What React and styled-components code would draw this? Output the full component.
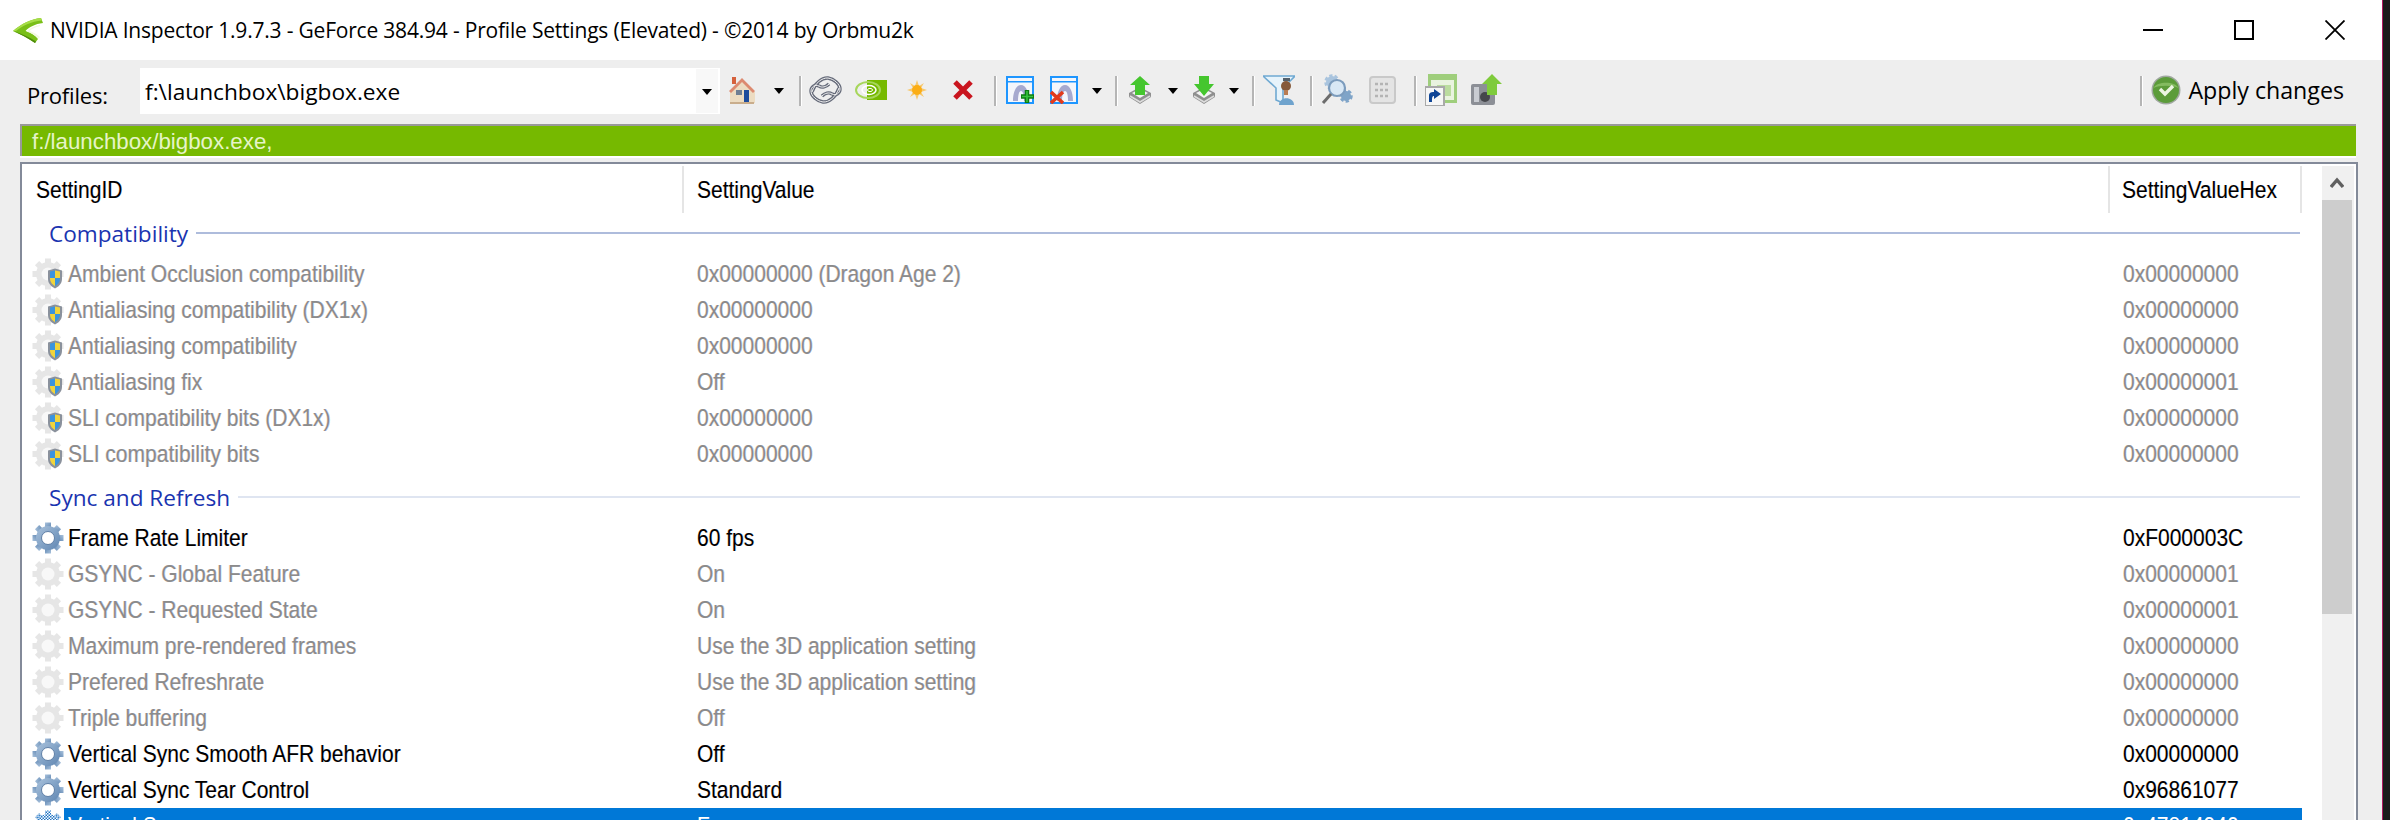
import React from "react";
import styled, { createGlobalStyle, css } from "styled-components";

const GlobalStyle = createGlobalStyle`
  html, body {
    margin: 0;
    padding: 0;
    background: #1b1b1b;
  }
`;

const groups = [
  {
    name: "Compatibility",
    first: true,
    rows: [
      ["Ambient Occlusion compatibility", "0x00000000 (Dragon Age 2)", "0x00000000", "shield"],
      ["Antialiasing compatibility (DX1x)", "0x00000000", "0x00000000", "shield"],
      ["Antialiasing compatibility", "0x00000000", "0x00000000", "shield"],
      ["Antialiasing fix", "Off", "0x00000001", "shield"],
      ["SLI compatibility bits (DX1x)", "0x00000000", "0x00000000", "shield"],
      ["SLI compatibility bits", "0x00000000", "0x00000000", "shield"],
    ],
  },
  {
    name: "Sync and Refresh",
    rows: [
      ["Frame Rate Limiter", "60 fps", "0xF000003C", "on"],
      ["GSYNC - Global Feature", "On", "0x00000001", "off"],
      ["GSYNC - Requested State", "On", "0x00000001", "off"],
      ["Maximum pre-rendered frames", "Use the 3D application setting", "0x00000000", "off"],
      ["Prefered Refreshrate", "Use the 3D application setting", "0x00000000", "off"],
      ["Triple buffering", "Off", "0x00000000", "off"],
      ["Vertical Sync Smooth AFR behavior", "Off", "0x00000000", "on"],
      ["Vertical Sync Tear Control", "Standard", "0x96861077", "on"],
      ["Vertical Sync", "Force on", "0x47814940", "selected"],
    ],
  },
];

const Gear = ({ mode }) => {
  const on = mode === "on";
  const selected = mode === "selected";
  const body = selected ? "url(#dither)" : on ? "url(#gearBlue)" : "#e6e6e6";
  const hole = selected ? "url(#dither)" : on ? "#ffffff" : "#f8f8f8";
  return (
    <svg width="32" height="32" viewBox="0 0 32 32">
      {[0, 45, 90, 135, 180, 225, 270, 315].map((a) => (
        <rect key={a} x="13" y="0.5" width="6" height="6" fill={body} transform={`rotate(${a} 16 16)`} />
      ))}
      <circle cx="16" cy="16" r="12" fill={body} />
      <circle cx="16" cy="16" r="6.5" fill={hole} stroke={on ? "#5f7fa6" : "none"} strokeWidth="1" />
      {mode === "shield" && (
        <g>
          <path d="M16 12.5 L23 10.5 L30 12.5 V21 C30 26 26 29 23 30.5 C20 29 16 26 16 21 Z" fill="#8a919c" />
          <path d="M18 13.6 L23 12.4 V20 H18 Z" fill="#3a94de" />
          <path d="M23 12.4 L28 13.6 V20 H23 Z" fill="#f1d43c" />
          <path d="M18 20 H23 V28 C20.5 26.5 18 24.5 18 20 Z" fill="#f1d43c" />
          <path d="M23 20 H28 C28 24.5 25.5 26.5 23 28 Z" fill="#3a94de" />
        </g>
      )}
    </svg>
  );
};

const SharedDefs = () => (
  <svg width="0" height="0" style={{ position: "absolute" }}>
    <defs>
      <linearGradient id="gearBlue" x1="0" y1="0" x2="1" y2="1">
        <stop offset="0" stopColor="#a9c2dc" />
        <stop offset="1" stopColor="#5f86b2" />
      </linearGradient>
      <pattern id="dither" width="3" height="3" patternUnits="userSpaceOnUse">
        <rect width="3" height="3" fill="#ffffff" />
        <rect width="1.5" height="1.5" fill="#1f74c4" />
        <rect x="1.5" y="1.5" width="1.5" height="1.5" fill="#1f74c4" />
      </pattern>
    </defs>
  </svg>
);

const NvLogo = () => (
  <svg width="30" height="25" viewBox="0 0 30 25">
    <path d="M28 0 L30 5 C22 6 16 9 12.5 13 C17 14 22 17 25 21 L22 25 C15 20 7 16 0 13 C8 6 18 1 28 0 Z" fill="#79bf17" />
    <path d="M28 0 L29 2.5 C18 3.5 9 8 3 13 L0 13 C8 6 18 1 28 0 Z" fill="#a6dd48" />
    <path d="M27 8 C22 9 18.5 11 16.5 13 C20 14 24 16 27 19 L25.5 20.5 C22 17 18 15 13.5 13.5 C17 10 22 7.5 27 7 Z" fill="#f2f8e0" />
    <path d="M0 13 C7 16 15 20 22 25 L23 23.5 C16 19 8 15.5 0 13 Z" fill="#4d8a0c" />
  </svg>
);

const HomeIcon = () => (
  <svg width="28" height="28" viewBox="0 0 28 28">
    <rect x="4" y="1" width="4" height="7" fill="#d5613c" />
    <path d="M14 3 L27 16 V27 H2 V16 Z" fill="#ecdcc2" />
    <path d="M14 2 L27 15 L25 17 L14 6 L3 17 L1 15 Z" fill="#dc8a70" />
    <rect x="8" y="14" width="6" height="5" fill="#6f7f94" />
    <rect x="16" y="14" width="5" height="13" fill="#1d4c9c" />
    <path d="M2 26 H26 V28 H2 Z" fill="#c9ad8c" />
  </svg>
);

const chainPaths = [
  "M3 16 C6 7 13 1.5 19 2 C25 3 31 8 31 13 C31 17 27 20 23 18",
  "M30 12 C27 21 20 26.5 14 26 C8 25 2 20 2 15 C2 11 6 8 10 10",
  "M10 10 C13 12 17 11 20 8",
  "M23 18 C20 16 16 17 13 20",
];

const ChainIcon = () => (
  <svg width="33" height="28" viewBox="0 0 33 28" fill="none">
    {chainPaths.map((d) => (
      <path key={d} d={d} stroke="#666b7a" strokeWidth="3.4" />
    ))}
    {chainPaths.map((d) => (
      <path key={d} d={d} stroke="#f2f2f2" strokeWidth="1" />
    ))}
  </svg>
);

const NvidiaIcon = () => (
  <svg width="32" height="20" viewBox="0 0 32 20" fill="none">
    <rect x="12" y="0" width="20" height="20" fill="#76b900" />
    <ellipse cx="13" cy="10" rx="12" ry="8" stroke="#a7d65c" strokeWidth="2" />
    <ellipse cx="14" cy="10" rx="7" ry="4.5" stroke="#ffffff" strokeWidth="1.5" />
    <ellipse cx="15" cy="10" rx="2.5" ry="1.6" stroke="#ffffff" strokeWidth="1" />
  </svg>
);

const SunIcon = () => (
  <svg width="20" height="20" viewBox="0 0 20 20">
    <path d="M10 0 L12 6 L17 3 L14 8 L20 10 L14 12 L17 17 L12 14 L10 20 L8 14 L3 17 L6 12 L0 10 L6 8 L3 3 L8 6 Z" fill="#f7c86d" />
    <circle cx="10" cy="10" r="5" fill="#fbad14" />
  </svg>
);

const RedCross = () => (
  <svg width="20" height="20" viewBox="0 0 20 20">
    <path d="M2 2 L18 18 M18 2 L2 18" stroke="#c9151e" strokeWidth="5" />
  </svg>
);

const WindowIcon = ({ del }) => (
  <svg width="28" height="28" viewBox="0 0 28 28">
    <rect x="1" y="1" width="26" height="26" fill="#f4f6fb" stroke="#1e96ff" strokeWidth="2" />
    <rect x="2" y="5" width="24" height="1.5" fill="#1e96ff" />
    <path d="M7 25 C7 16 10 9 15 9 C20 9 23 16 23 25 H18 C18 19 17 15 15 15 C13 15 12 19 12 25 Z" fill="#a6a9cf" />
    {del ? (
      <path d="M1 16 L13 27 M13 16 L1 27" stroke="#e23a1c" strokeWidth="3.6" />
    ) : (
      <path d="M21 14 V27 M15 20.5 H28" stroke="#0d7d12" strokeWidth="4.5" />
    )}
    {!del && <path d="M21 15 V26 M16 20.5 H27" stroke="#37c43c" strokeWidth="1.6" />}
  </svg>
);

const TrayIcon = ({ down }) => (
  <svg width="24" height="28" viewBox="0 0 24 28">
    <path d="M1 17 L12 11 L23 17 V21 L12 28 L1 21 Z" fill="#8f8f8f" />
    <path d="M4 17 L12 13 L20 17 L12 22 Z" fill="#f4f4f4" />
    <path d="M2 20 L12 26 L22 20" fill="none" stroke="#dcdcdc" strokeWidth="1.6" />
    {down ? (
      <path d="M7 0 H17 V8 H22 L12 20 L2 8 H7 Z" fill="#45c62e" />
    ) : (
      <path d="M12 0 L22 9 H17 V19 H7 V9 H2 Z" fill="#45c62e" />
    )}
  </svg>
);

const FilterIcon = () => (
  <svg width="32" height="30" viewBox="0 0 32 30">
    <path d="M0 1 H32 L20 13 V28 L13 25 V13 Z" fill="#e6f3fb" stroke="#6fa9d2" strokeWidth="1.6" />
    <circle cx="23" cy="11" r="5" fill="#85593a" />
    <rect x="20" y="3" width="7" height="3" fill="#55606b" />
    <path d="M16 30 C16 21 31 21 31 30 Z" fill="#6fa3cd" />
    <rect x="21" y="15" width="4" height="5" fill="#b87c53" />
  </svg>
);

const SearchGearIcon = () => (
  <svg width="32" height="32" viewBox="0 0 32 32" fill="none">
    <circle cx="11" cy="8" r="6" fill="#a9c4de" stroke="#a9c4de" strokeWidth="3.5" strokeDasharray="3 2" />
    <circle cx="25" cy="22" r="5" fill="#7fa4c8" stroke="#7fa4c8" strokeWidth="3.5" strokeDasharray="3 2" />
    <circle cx="16" cy="14" r="8" fill="#d9e8f5" stroke="#7c9cbd" strokeWidth="2.2" />
    <path d="M10 20 L2 29" stroke="#6c6c6c" strokeWidth="3" />
  </svg>
);

const GridIcon = () => (
  <svg width="27" height="28" viewBox="0 0 27 28" fill="none">
    <rect x="1" y="1" width="25" height="26" rx="3" fill="#e4e4e4" stroke="#c9c9c9" strokeWidth="2" />
    <path d="M6 8 H21 M6 14 H21 M6 20 H21" stroke="#b4b4b4" strokeWidth="2.4" strokeDasharray="3 2" />
  </svg>
);

const ShortcutIcon = () => (
  <svg width="32" height="32" viewBox="0 0 32 32">
    <rect x="3" y="0" width="29" height="29" fill="#9fce7c" />
    <rect x="6" y="6" width="23" height="20" fill="#e9f3df" />
    <rect x="12" y="11" width="14" height="11" fill="#bbdc9f" />
    <rect x="0" y="13" width="19" height="19" fill="#f6f6f6" stroke="#a9a9a9" strokeWidth="2" />
    <path d="M4 28 V21 C4 19 6 18 8 18 H9 V15 L16 20 L9 25 V22 C7 22 7 24 7 28 Z" fill="#0f4596" />
  </svg>
);

const UploadIcon = () => (
  <svg width="31" height="32" viewBox="0 0 31 32">
    <rect x="0" y="10" width="24" height="21" rx="2" fill="#8c8f96" />
    <rect x="3" y="13" width="5" height="15" fill="#c9ccd2" />
    <circle cx="14" cy="23" r="5" fill="#45474c" />
    <path d="M21 0 L31 10 H26 V21 H16 V10 H11 Z" fill="#7fcb3c" />
  </svg>
);

const CheckBadge = () => (
  <svg width="30" height="30" viewBox="0 0 30 30">
    <circle cx="15" cy="15" r="14.5" fill="#a0a8a0" />
    <circle cx="15" cy="15" r="13" fill="#5c9c3a" />
    <path d="M2.5 13 C6 6 24 6 27.5 13 C22 10 8 10 2.5 13 Z" fill="#84bb60" />
    <path d="M9 14 L14 19 L22 11" stroke="#ecf5e2" strokeWidth="3.4" fill="none" />
  </svg>
);

export default function App() {
  return (
    <Screen>
      <GlobalStyle />
      <SharedDefs />
      <Window>
        <TitleBar>
          <LogoSlot>
            <NvLogo />
          </LogoSlot>
          <TitleText>
            NVIDIA Inspector 1.9.7.3 - GeForce 384.94 - Profile Settings (Elevated) - ©2014 by Orbmu2k
          </TitleText>
          <WinButtons>
            <WinMin />
            <WinMax />
            <svg width="20" height="20" viewBox="0 0 20 20">
              <path d="M0.5 0.5 L19.5 19.5 M19.5 0.5 L0.5 19.5" stroke="#000" strokeWidth="1.8" />
            </svg>
          </WinButtons>
        </TitleBar>

        <Toolbar>
          <ProfilesLabel>Profiles:</ProfilesLabel>
          <Combo>
            <ComboText>f:\launchbox\bigbox.exe</ComboText>
            <ComboButton>
              <Caret />
            </ComboButton>
          </Combo>
          <Tool $ml={8}><HomeIcon /></Tool>
          <Caret $ml={18} />
          <Sep $ml={15} />
          <Tool $ml={8}><ChainIcon /></Tool>
          <Tool $ml={13}><NvidiaIcon /></Tool>
          <Tool $ml={20}><SunIcon /></Tool>
          <Tool $ml={26}><RedCross /></Tool>
          <Sep $ml={21} />
          <Tool $ml={10}><WindowIcon /></Tool>
          <Tool $ml={16}><WindowIcon del /></Tool>
          <Caret $ml={14} />
          <Sep $ml={13} />
          <Tool $ml={11}><TrayIcon /></Tool>
          <Caret $ml={16} />
          <Tool $ml={14}><TrayIcon down /></Tool>
          <Caret $ml={13} />
          <Sep $ml={13} />
          <Tool $ml={9}><FilterIcon /></Tool>
          <Sep $ml={15} />
          <Tool $ml={9}><SearchGearIcon /></Tool>
          <Tool $ml={16}><GridIcon /></Tool>
          <Sep $ml={18} />
          <Tool $ml={9}><ShortcutIcon /></Tool>
          <Tool $ml={14}><UploadIcon /></Tool>
          <ApplyGroup>
            <Sep />
            <Tool $ml={9}><CheckBadge /></Tool>
            <ApplyText>Apply changes</ApplyText>
          </ApplyGroup>
        </Toolbar>

        <Content>
          <ProfileBar>f:/launchbox/bigbox.exe,</ProfileBar>
          <ListFrame>
            <ListArea>
              <HeaderRow>
                <HeaderCell $w={662} $pad={14}><span>SettingID</span></HeaderCell>
                <HeaderCell $w={1426} $pad={13}><span>SettingValue</span></HeaderCell>
                <HeaderCell $w={192} $pad={12}><span>SettingValueHex</span></HeaderCell>
              </HeaderRow>
              {groups.map((group) => (
                <section key={group.name}>
                  <GroupRow $first={group.first}>
                    <GroupName>{group.name}</GroupName>
                    <GroupLine $first={group.first} />
                  </GroupRow>
                  {group.rows.map(([label, value, hex, mode]) => (
                    <Row key={label}>
                      <IconCell>
                        <Gear mode={mode} />
                      </IconCell>
                      <RowBody $mode={mode}>
                        <LabelCell>{label}</LabelCell>
                        <ValueCell>{value}</ValueCell>
                        <HexCell>{hex}</HexCell>
                      </RowBody>
                    </Row>
                  ))}
                </section>
              ))}
            </ListArea>
            <ScrollBar>
              <ScrollUp>
                <svg width="14" height="12" viewBox="0 0 14 12">
                  <path d="M1 10 L7 3 L13 10" fill="none" stroke="#606060" strokeWidth="3.4" />
                </svg>
              </ScrollUp>
              <ScrollThumb />
            </ScrollBar>
          </ListFrame>
        </Content>
      </Window>
    </Screen>
  );
}

// the reference text is taller than Liberation Sans and has ClearType colour fringes
const listText = css`
  display: inline-block;
  font-family: "Liberation Sans", Arial, sans-serif;
  font-size: 21px;
  transform: scaleY(1.12);
  text-shadow: 0.6px 0 0 rgba(0, 110, 255, 0.22), -0.6px 0 0 rgba(255, 130, 0, 0.22);
`;

const Screen = styled.div`
  width: 2390px;
  height: 820px;
  overflow: hidden;
  background: #1b1b1b;
`;

const Window = styled.div`
  width: 2382px;
  height: 820px;
  background: #eeeeee;
  border-right: 1px solid #b01860;
  display: flex;
  flex-direction: column;
  font-family: "Liberation Sans", Arial, sans-serif;
`;

const TitleBar = styled.div`
  height: 60px;
  flex: none;
  background: #ffffff;
  display: flex;
  align-items: center;
  padding: 0 37px 0 13px;
`;

const LogoSlot = styled.div`
  display: flex;
  width: 37px;
`;

const TitleText = styled.div`
  font-family: "Open Sans", sans-serif;
  font-size: 21px;
  letter-spacing: -0.2px;
  color: #000000;
`;

const WinButtons = styled.div`
  margin-left: auto;
  display: flex;
  align-items: center;
  gap: 71px;
`;

const WinMin = styled.div`
  width: 20px;
  height: 2px;
  background: #000000;
`;

const WinMax = styled.div`
  width: 16px;
  height: 16px;
  border: 2px solid #000000;
`;

const Toolbar = styled.div`
  height: 64px;
  flex: none;
  box-sizing: border-box;
  display: flex;
  align-items: center;
  padding: 0 38px 4px 27px;
`;

const ProfilesLabel = styled.div`
  width: 113px;
  margin-top: 10px;
  font-family: "Open Sans", sans-serif;
  font-size: 22px;
  letter-spacing: -0.2px;
  color: #000000;
`;

const Combo = styled.div`
  width: 580px;
  height: 46px;
  margin-top: 2px;
  background: #ffffff;
  display: flex;
  align-items: center;
  justify-content: space-between;
`;

const ComboText = styled.div`
  padding-left: 5px;
  font-family: "Open Sans", sans-serif;
  font-size: 22.7px;
  color: #000000;
`;

const ComboButton = styled.div`
  width: 22px;
  height: 44px;
  margin-right: 2px;
  background: #f8f8f8;
  display: flex;
  align-items: center;
  justify-content: center;
`;

const Caret = styled.div`
  width: 0;
  height: 0;
  flex: none;
  margin-left: ${(p) => p.$ml || 0}px;
  margin-top: 2px;
  border-left: 5px solid transparent;
  border-right: 5px solid transparent;
  border-top: 6px solid #000000;
`;

const Sep = styled.div`
  width: 2px;
  height: 30px;
  flex: none;
  margin-left: ${(p) => p.$ml || 0}px;
  margin-top: 2px;
  background: #b5b5b5;
  box-shadow: 1px 0 0 #ffffff;
`;

const Tool = styled.div`
  display: flex;
  flex: none;
  margin-left: ${(p) => p.$ml || 0}px;
`;

const ApplyGroup = styled.div`
  margin-left: auto;
  display: flex;
  align-items: center;
`;

const ApplyText = styled.div`
  margin-left: 7px;
  font-family: "Open Sans", sans-serif;
  font-size: 23.2px;
  color: #000000;
`;

const Content = styled.div`
  flex: 1;
  display: flex;
  flex-direction: column;
  padding: 0 24px 0 20px;
  min-height: 0;
`;

const ProfileBar = styled.div`
  height: 30px;
  flex: none;
  margin-right: 2px;
  border-top: 2px solid #999999;
  border-left: 2px solid #999999;
  box-shadow: 0 2px 0 #ffffff;
  background: #76b900;
  color: #e6f4c8;
  font-size: 22.3px;
  line-height: 32px;
  padding-left: 10px;
`;

const ListFrame = styled.div`
  flex: 1;
  margin-top: 6px;
  display: flex;
  background: #ffffff;
  border: 2px solid #838a99;
  border-bottom: none;
  min-height: 0;
`;

const ListArea = styled.div`
  width: 2300px;
  flex: none;
`;

const HeaderRow = styled.div`
  height: 49px;
  padding-top: 2px;
  box-sizing: border-box;
  display: flex;
`;

const HeaderCell = styled.div`
  width: ${(p) => p.$w}px;
  padding-left: ${(p) => p.$pad}px;
  box-sizing: border-box;
  display: flex;
  align-items: center;
  color: #000000;
  border-right: 2px solid #e5e5e5;

  span {
    ${listText}
  }
`;

const GroupRow = styled.div`
  height: ${(p) => (p.$first ? 43 : 48)}px;
  box-sizing: border-box;
  padding: ${(p) => (p.$first ? "0 22px 3px 27px" : "2px 22px 0 27px")};
  display: flex;
  align-items: center;
  gap: 8px;
`;

const GroupName = styled.div`
  font-family: "Open Sans", sans-serif;
  font-size: 22.6px;
  color: #1a34b0;
  white-space: nowrap;
`;

const GroupLine = styled.div`
  flex: 1;
  height: 2px;
  background: ${(p) => (p.$first ? "#aebcdc" : "#dfe5f1")};
`;

const Row = styled.div`
  height: 36px;
  width: 2280px;
  padding-left: 10px;
  box-sizing: border-box;
  display: flex;
  align-items: center;
`;

const IconCell = styled.div`
  width: 32px;
  flex: none;
  display: flex;
`;

const rowColor = { on: "#000000", selected: "#ffffff" };

const RowBody = styled.div`
  flex: 1;
  height: 36px;
  display: grid;
  grid-template-columns: 618px 1427px 1fr;
  align-items: center;
  background: ${(p) => (p.$mode === "selected" ? "#0078d7" : "transparent")};
  color: ${(p) => rowColor[p.$mode] || "#8b8b8b"};
`;

const LabelCell = styled.div`
  ${listText}
  padding-left: 4px;
  white-space: nowrap;
`;

const ValueCell = styled.div`
  ${listText}
  padding-left: 15px;
  white-space: nowrap;
`;

const HexCell = styled.div`
  ${listText}
  padding-left: 14px;
  white-space: nowrap;
`;

const ScrollBar = styled.div`
  width: 32px;
  flex: none;
  margin-top: 2px;
  background: #f0f0f0;
`;

const ScrollUp = styled.div`
  height: 34px;
  width: 30px;
  display: flex;
  align-items: center;
  justify-content: center;
`;

const ScrollThumb = styled.div`
  width: 30px;
  height: 414px;
  background: #cdcdcd;
`;
